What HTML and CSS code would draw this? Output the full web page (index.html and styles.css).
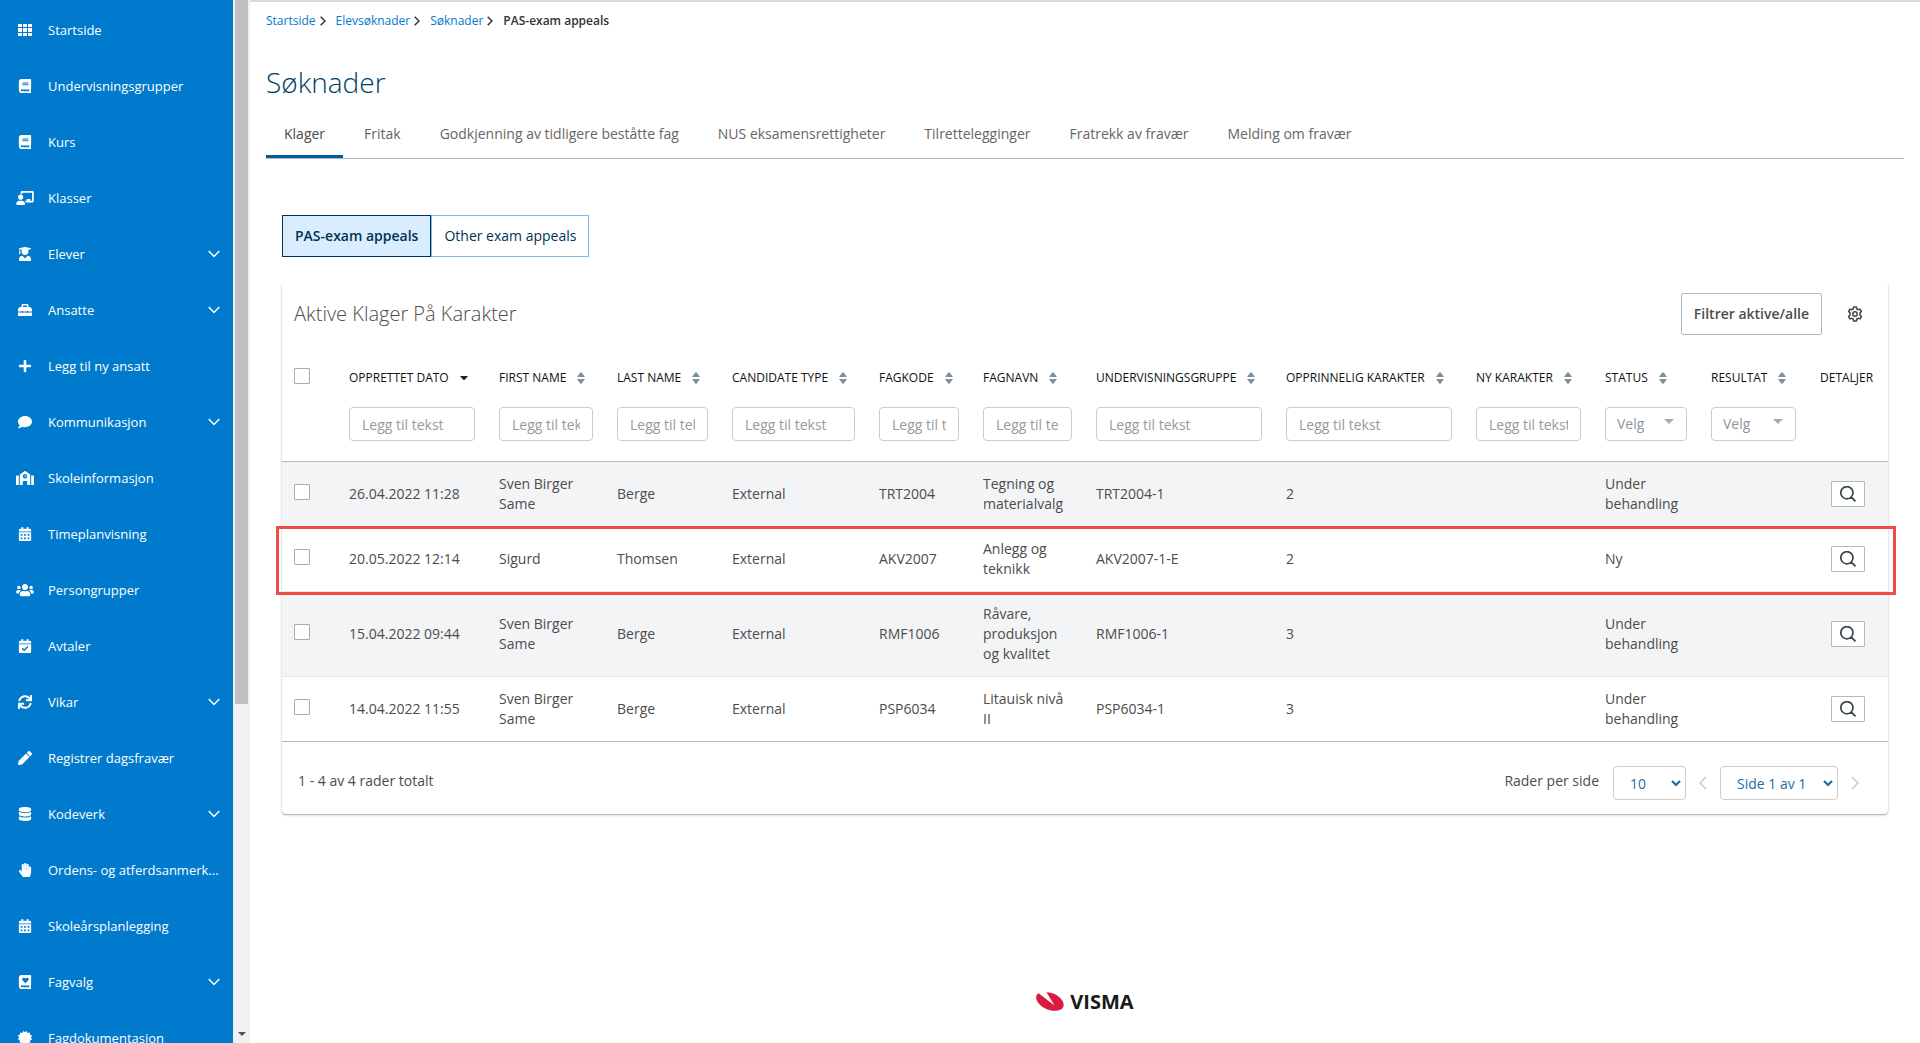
FILE: index.html
```html
<!DOCTYPE html>
<html lang="no">
<head>
<meta charset="utf-8">
<meta name="viewport" content="width=device-width, initial-scale=1">
<title>Søknader – PAS-exam appeals</title>
<link rel="stylesheet" href="styles.css">
</head>
<body>
<svg class="sprite" aria-hidden="true">
  <symbol id="i-grid" viewBox="0 0 14 14"><path d="M0 1h4v3H0zM5 1h4v3H5zM10 1h4v3h-4zM0 5h4v4H0zM5 5h4v4H5zM10 5h4v4h-4zM0 10h4v3H0zM5 10h4v3H5zM10 10h4v3h-4z"/></symbol>
  <symbol id="i-book" viewBox="0 0 448 512"><path d="M448 360V24c0-13.3-10.7-24-24-24H96C43 0 0 43 0 96v320c0 53 43 96 96 96h328c13.3 0 24-10.7 24-24v-16c0-7.5-3.5-14.3-8.9-18.7-4.2-15.4-4.2-59.3 0-74.7 5.4-4.3 8.9-11.1 8.9-18.6zM128 134c0-3.3 2.7-6 6-6h212c3.3 0 6 2.7 6 6v20c0 3.3-2.7 6-6 6H134c-3.3 0-6-2.7-6-6v-20zm0 64c0-3.3 2.7-6 6-6h212c3.3 0 6 2.7 6 6v20c0 3.3-2.7 6-6 6H134c-3.3 0-6-2.7-6-6v-20zm253.4 250H96c-17.7 0-32-14.3-32-32 0-17.6 14.4-32 32-32h285.4c-1.9 17.1-1.9 46.9 0 64z"/></symbol>
  <symbol id="i-teacher" viewBox="0 0 640 512"><path d="M208 352c-2.39 0-4.78.35-7.06 1.09C187.98 357.3 174.35 360 160 360c-14.35 0-27.98-2.7-40.95-6.91-2.28-.74-4.66-1.09-7.05-1.09C49.94 352-.33 402.48 0 464.62.14 490.88 21.73 512 48 512h224c26.27 0 47.86-21.12 48-47.38.33-62.14-49.94-112.62-112-112.62zm-48-32c53.02 0 96-42.98 96-96s-42.98-96-96-96-96 42.98-96 96 42.98 96 96 96zM592 0H208c-26.47 0-48 22.25-48 49.59V96c23.42 0 45.1 6.78 64 17.8V64h352v288h-64v-64H384v64h-76.24c19.1 16.69 33.12 38.73 39.69 64H592c26.47 0 48-22.25 48-49.59V49.59C640 22.25 618.47 0 592 0z"/></symbol>
  <symbol id="i-graduate" viewBox="0 0 448 512"><path d="M319.4 320.6L224 416l-95.4-95.4C57.1 323.7 0 382.2 0 454.4v9.6c0 26.5 21.5 48 48 48h352c26.5 0 48-21.5 48-48v-9.6c0-72.2-57.1-130.7-128.6-133.8zM13.6 79.8l6.4 1.5v58.4c-7 4.2-12 11.5-12 20.3 0 8.4 4.6 15.4 11.1 19.7L3.5 242c-1.7 6.9 2.1 14 7.6 14h41.8c5.5 0 9.3-7.1 7.6-14l-15.6-62.3C51.4 175.4 56 168.4 56 160c0-8.8-5-16.1-12-20.3V87.1l66 15.9c-8.6 17.2-14 36.4-14 57 0 70.7 57.3 128 128 128s128-57.3 128-128c0-20.6-5.3-39.8-14-57l96.3-23.2c18.2-4.4 18.2-27.1 0-31.5l-190.4-46c-13-3.1-26.7-3.1-39.7 0L13.6 48.2c-18.1 4.4-18.1 27.2 0 31.6z"/></symbol>
  <symbol id="i-toolbox" viewBox="0 0 14 14"><path fill-rule="evenodd" d="M3.5 4V2.4C3.5 1.600 4 1 4.900 1h4.200c.9 0 1.400.6 1.400 1.400V4h1.200c.3 0 .6.100.8.300l1.200 1.200c.2.200.3.500.3.800V8.500H10V8H9v.5H5V8H4v.5H0V6.300c0-.3.100-.6.300-.8l1.200-1.200c.2-.2.500-.3.800-.3zM5 4h4V2.500H5zM0 9.500h4v.5h1v-.5h4v.5h1v-.5h4V12c0 .6-.4 1-1 1H1c-.6 0-1-.4-1-1z"/></symbol>
  <symbol id="i-plus" viewBox="0 0 448 512"><path d="M416 208H272V64c0-17.670-14.330-32-32-32h-32c-17.670 0-32 14.330-32 32v144H32c-17.670 0-32 14.330-32 32v32c0 17.670 14.330 32 32 32h144v144c0 17.670 14.330 32 32 32h32c17.670 0 32-14.330 32-32V304h144c17.670 0 32-14.330 32-32v-32c0-17.670-14.330-32-32-32z"/></symbol>
  <symbol id="i-comment" viewBox="0 0 512 512"><path d="M256 32C114.600 32 0 125.100 0 240c0 49.600 21.400 95 57 130.700C44.500 421.100 2.700 466 2.200 466.500c-2.200 2.300-2.800 5.700-1.500 8.700S4.800 480 8 480c66.300 0 116-31.800 140.600-51.400 32.700 12.300 69 19.400 107.400 19.400 141.400 0 256-93.100 256-208S397.400 32 256 32z"/></symbol>
  <symbol id="i-school" viewBox="0 0 18 14"><path fill-rule="evenodd" d="M0 5.500c0-.6.400-1 1-1h1.800V14H.5c-.3 0-.5-.2-.5-.5zM18 5.500c0-.6-.4-1-1-1h-1.800V14h2.300c.3 0 .5-.2.500-.5zM3.800 3.500 8.400.3c.4-.3.800-.3 1.200 0l4.600 3.200V14H11.200v-3.500c0-.3-.2-.5-.5-.5H7.300c-.3 0-.5.200-.5.500V14h-3zM9 3a2.200 2.200 0 1 0 0 4.400A2.200 2.200 0 0 0 9 3zM8.700 4h.7v1h.8v.7H8.700z"/></symbol>
  <symbol id="i-calendar" viewBox="0 0 448 512"><path fill-rule="evenodd" d="M0 464c0 26.500 21.500 48 48 48h352c26.500 0 48-21.500 48-48V192H0zM64 256h64v64H64zM192 256h64v64h-64zM320 256h64v64h-64zM64 384h64v64H64zM192 384h64v64h-64zM320 384h64v64h-64zM400 64h-48V16c0-8.800-7.200-16-16-16h-32c-8.800 0-16 7.200-16 16v48H160V16c0-8.800-7.200-16-16-16h-32c-8.800 0-16 7.200-16 16v48H48C21.500 64 0 85.500 0 112v48h448v-48c0-26.500-21.500-48-48-48z"/></symbol>
  <symbol id="i-users" viewBox="0 0 640 512"><path d="M96 224c35.300 0 64-28.700 64-64s-28.700-64-64-64-64 28.700-64 64 28.700 64 64 64zm448 0c35.300 0 64-28.700 64-64s-28.700-64-64-64-64 28.700-64 64 28.700 64 64 64zm32 32h-64c-17.600 0-33.500 7.100-45.100 18.600 40.300 22.100 68.900 62 75.100 109.400h66c17.700 0 32-14.300 32-32v-32c0-35.300-28.700-64-64-64zm-256 0c61.900 0 112-50.100 112-112S381.900 32 320 32 208 82.100 208 144s50.100 112 112 112zm76.800 32h-8.300c-20.800 10-43.900 16-68.500 16s-47.600-6-68.500-16h-8.300C179.600 288 128 339.600 128 403.200V432c0 26.500 21.500 48 48 48h288c26.500 0 48-21.500 48-48v-28.800c0-63.600-51.600-115.200-115.200-115.200zm-223.700-13.400C161.500 263.100 145.600 256 128 256H64c-35.300 0-64 28.700-64 64v32c0 17.700 14.300 32 32 32h65.900c6.300-47.400 34.900-87.300 75.200-109.400z"/></symbol>
  <symbol id="i-check" viewBox="0 0 448 512"><path fill-rule="evenodd" d="M0 464c0 26.500 21.500 48 48 48h352c26.500 0 48-21.500 48-48V192H0zM192 446l-90-90 38-38 54 54 116-116 38 38zM400 64h-48V16c0-8.800-7.200-16-16-16h-32c-8.800 0-16 7.200-16 16v48H160V16c0-8.800-7.200-16-16-16h-32c-8.800 0-16 7.200-16 16v48H48C21.500 64 0 85.500 0 112v48h448v-48c0-26.500-21.500-48-48-48z"/></symbol>
  <symbol id="i-sync" viewBox="0 0 512 512"><path d="M440.650 12.570l4 82.770A247.160 247.160 0 0 0 255.830 8C134.730 8 33.910 94.920 12.290 209.820A12 12 0 0 0 24.090 224h49.050a12 12 0 0 0 11.670-9.260 175.910 175.910 0 0 1 317-56.940l-101.460-4.860a12 12 0 0 0-12.570 12v47.410a12 12 0 0 0 12 12H500a12 12 0 0 0 12-12V12a12 12 0 0 0-12-12h-47.370a12 12 0 0 0-11.980 12.570zM255.830 432a175.610 175.610 0 0 1-146-77.800l101.800 4.870a12 12 0 0 0 12.570-12v-47.400a12 12 0 0 0-12-12H12a12 12 0 0 0-12 12V500a12 12 0 0 0 12 12h47.350a12 12 0 0 0 12-12.600l-4.150-82.570A247.170 247.170 0 0 0 255.830 504c121.110 0 221.930-86.920 243.550-201.820a12 12 0 0 0-11.800-14.180h-49.050a12 12 0 0 0-11.670 9.260A175.860 175.860 0 0 1 255.830 432z"/></symbol>
  <symbol id="i-pencil" viewBox="0 0 512 512"><path d="M497.900 142.100l-46.100 46.100c-4.700 4.700-12.300 4.700-17 0l-111-111c-4.700-4.700-4.700-12.300 0-17l46.100-46.100c18.700-18.700 49.100-18.700 67.900 0l60.100 60.100c18.800 18.700 18.800 49.100 0 67.900zM284.200 99.800L21.600 362.400.4 483.900c-2.900 16.400 11.400 30.600 27.800 27.800l121.500-21.300 262.600-262.600c4.700-4.700 4.700-12.300 0-17l-111-111c-4.800-4.700-12.400-4.700-17.100 0z"/></symbol>
  <symbol id="i-database" viewBox="0 0 448 512"><path d="M448 73.143v45.714C448 159.143 347.667 192 224 192S0 159.143 0 118.857V73.143C0 32.857 100.333 0 224 0s224 32.857 224 73.143zM448 176v102.857C448 319.143 347.667 352 224 352S0 319.143 0 278.857V176c48.125 33.143 136.208 48.572 224 48.572S399.874 209.143 448 176zm0 160v102.857C448 479.143 347.667 512 224 512S0 479.143 0 438.857V336c48.125 33.143 136.208 48.572 224 48.572S399.874 369.143 448 336z"/></symbol>
  <symbol id="i-hand" viewBox="0 0 448 512"><path d="M408.781 128.007C386.356 127.578 368 146.360 368 168.790V256h-8V79.790c0-22.430-18.356-41.212-40.781-40.783C297.488 39.423 280 57.169 280 79v177h-8V40.790C272 18.360 253.644-.422 231.219.007 209.488.423 192 18.169 192 40v216h-8V80.790c0-22.430-18.356-41.212-40.781-40.783C121.488 40.423 104 58.169 104 80v235.992l-31.648-43.519c-12.993-17.866-38.009-21.817-55.877-8.823-17.865 12.994-21.815 38.010-8.822 55.877l125.601 172.705A48 48 0 0 0 172.073 512h197.590c22.274 0 41.622-15.324 46.724-37.006l26.508-112.660a192.011 192.011 0 0 0 5.104-43.975V168c.001-21.831-17.487-39.577-39.218-39.993z"/></symbol>
  <symbol id="i-heartbook" viewBox="0 0 448 512"><path fill-rule="evenodd" d="M448 360V24c0-13.300-10.700-24-24-24H96C43 0 0 43 0 96v320c0 53 43 96 96 96h328c13.300 0 24-10.700 24-24v-16c0-7.500-3.500-14.300-8.900-18.700-4.200-15.400-4.200-59.300 0-74.700 5.400-4.300 8.900-11.100 8.900-18.600zM240 304 140 200c-28-30-24-72 4-92 28-19 60-14 84 10l12 13 12-13c24-24 56-29 84-10 28 20 32 62 4 92zM381.400 448H96c-17.700 0-32-14.300-32-32 0-17.600 14.400-32 32-32h285.400c-1.900 17.100-1.900 46.900 0 64z"/></symbol>
  <symbol id="i-certificate" viewBox="0 0 14 14"><path d="M7 1.300 8.700 0l1 1.900 2.200-.4.200 2.200 1.900.9L13 6.500l1 2-1.900 1 .1 2.200-2.300.1L9 14l-2-1.200L5 14l-.9-2.200-2.300-.1.100-2.200L0 8.500l1-2-1-1.900.9-.9H1.900l.2-2.200 2.200.4 1-1.900z"/></symbol>
  <symbol id="i-down" viewBox="0 0 12 8"><path d="M.700.900 6 6.500 11.300.900" fill="none" stroke="currentColor" stroke-width="1.500"/></symbol>
  <symbol id="i-down-bold" viewBox="0 0 10 7"><path d="M1 1 5 5 9 1" fill="none" stroke="currentColor" stroke-width="2.200"/></symbol>
  <symbol id="i-sort" viewBox="0 0 8 12"><path d="M0 5 3 .700Q4-.300 5 .700L8 5zM0 7h8L5 11.300q-1 1-2 0z"/></symbol>
  <symbol id="i-sorted" viewBox="0 0 8 12"><path d="M0 4h8L5 7.500q-1 1-2 0z"/></symbol>
  <symbol id="i-search" viewBox="0 0 16 16"><path d="M11 10.800 15.500 15.300M13 6.700a6.100 6.100 0 1 1-12.200 0 6.100 6.100 0 0 1 12.200 0z" fill="none" stroke="currentColor" stroke-width="1.700"/></symbol>
  <symbol id="i-next" viewBox="0 0 8 14"><path d="M1 1l6 6-6 6" fill="none" stroke="currentColor" stroke-width="1.500"/></symbol>
  <symbol id="i-crumb" viewBox="0 0 6 10"><path d="M.700.700 5 5 .700 9.300" fill="none" stroke="currentColor" stroke-width="1.500"/></symbol>
  <symbol id="i-gear" viewBox="0 0 16 16"><path d="M6.600 1h2.800l.4 2 1.300.7 1.900-.6 1.400 2.400L13 6.900v2.200l1.400 1.400-1.400 2.400-1.900-.6-1.300.7-.4 2H6.600l-.4-2-1.300-.7-1.900.6-1.400-2.400L3 9.100V6.900L1.600 5.500 3 3.100l1.900.6L6.200 3z" fill="none" stroke="currentColor" stroke-width="1.500" stroke-linejoin="round"/><circle cx="8" cy="8" r="2.200" fill="none" stroke="currentColor" stroke-width="1.500"/></symbol>
</svg>

<div class="app">
  <nav class="sidebar" aria-label="Hovedmeny">
    <ul class="menu">
      <li><a class="menu-link" href="#"><svg class="menu-icon"><use href="#i-grid"/></svg><span class="menu-text">Startside</span></a></li>
      <li><a class="menu-link" href="#"><svg class="menu-icon"><use href="#i-book"/></svg><span class="menu-text">Undervisningsgrupper</span></a></li>
      <li><a class="menu-link" href="#"><svg class="menu-icon"><use href="#i-book"/></svg><span class="menu-text">Kurs</span></a></li>
      <li><a class="menu-link" href="#"><svg class="menu-icon"><use href="#i-teacher"/></svg><span class="menu-text">Klasser</span></a></li>
      <li><a class="menu-link" href="#"><svg class="menu-icon"><use href="#i-graduate"/></svg><span class="menu-text">Elever</span><svg class="menu-arrow"><use href="#i-down"/></svg></a></li>
      <li><a class="menu-link" href="#"><svg class="menu-icon"><use href="#i-toolbox"/></svg><span class="menu-text">Ansatte</span><svg class="menu-arrow"><use href="#i-down"/></svg></a></li>
      <li><a class="menu-link" href="#"><svg class="menu-icon"><use href="#i-plus"/></svg><span class="menu-text">Legg til ny ansatt</span></a></li>
      <li><a class="menu-link" href="#"><svg class="menu-icon"><use href="#i-comment"/></svg><span class="menu-text">Kommunikasjon</span><svg class="menu-arrow"><use href="#i-down"/></svg></a></li>
      <li><a class="menu-link" href="#"><svg class="menu-icon"><use href="#i-school"/></svg><span class="menu-text">Skoleinformasjon</span></a></li>
      <li><a class="menu-link" href="#"><svg class="menu-icon"><use href="#i-calendar"/></svg><span class="menu-text">Timeplanvisning</span></a></li>
      <li><a class="menu-link" href="#"><svg class="menu-icon"><use href="#i-users"/></svg><span class="menu-text">Persongrupper</span></a></li>
      <li><a class="menu-link" href="#"><svg class="menu-icon"><use href="#i-check"/></svg><span class="menu-text">Avtaler</span></a></li>
      <li><a class="menu-link" href="#"><svg class="menu-icon"><use href="#i-sync"/></svg><span class="menu-text">Vikar</span><svg class="menu-arrow"><use href="#i-down"/></svg></a></li>
      <li><a class="menu-link" href="#"><svg class="menu-icon"><use href="#i-pencil"/></svg><span class="menu-text">Registrer dagsfravær</span></a></li>
      <li><a class="menu-link" href="#"><svg class="menu-icon"><use href="#i-database"/></svg><span class="menu-text">Kodeverk</span><svg class="menu-arrow"><use href="#i-down"/></svg></a></li>
      <li><a class="menu-link" href="#"><svg class="menu-icon"><use href="#i-hand"/></svg><span class="menu-text">Ordens- og atferdsanmerk...</span></a></li>
      <li><a class="menu-link" href="#"><svg class="menu-icon"><use href="#i-calendar"/></svg><span class="menu-text">Skoleårsplanlegging</span></a></li>
      <li><a class="menu-link" href="#"><svg class="menu-icon"><use href="#i-heartbook"/></svg><span class="menu-text">Fagvalg</span><svg class="menu-arrow"><use href="#i-down"/></svg></a></li>
      <li><a class="menu-link" href="#"><svg class="menu-icon"><use href="#i-certificate"/></svg><span class="menu-text">Fagdokumentasjon</span></a></li>
    </ul>
    <div class="scrollbar" aria-hidden="true"><span class="scroll-thumb"></span><span class="scroll-down"></span></div>
  </nav>

  <main class="main">
    <nav aria-label="Brødsmulesti">
      <ol class="crumbs">
        <li class="crumb"><a href="#">Startside</a><svg class="crumb-icon"><use href="#i-crumb"/></svg></li>
        <li class="crumb"><a href="#">Elevsøknader</a><svg class="crumb-icon"><use href="#i-crumb"/></svg></li>
        <li class="crumb"><a href="#">Søknader</a><svg class="crumb-icon"><use href="#i-crumb"/></svg></li>
        <li class="crumb crumb-current" aria-current="page">PAS-exam appeals</li>
      </ol>
    </nav>
    <h1 class="page-title">Søknader</h1>
    <nav class="tabs" aria-label="Søknadstyper">
      <a class="tab tab-active" href="#">Klager</a>
      <a class="tab" href="#">Fritak</a>
      <a class="tab" href="#">Godkjenning av tidligere beståtte fag</a>
      <a class="tab" href="#">NUS eksamensrettigheter</a>
      <a class="tab" href="#">Tilrettelegginger</a>
      <a class="tab" href="#">Fratrekk av fravær</a>
      <a class="tab" href="#">Melding om fravær</a>
    </nav>

    <div class="content">
      <div class="toggle">
        <button class="toggle-btn toggle-on" type="button" aria-pressed="true">PAS-exam appeals</button>
        <button class="toggle-btn" type="button" aria-pressed="false">Other exam appeals</button>
      </div>

      <section class="card" aria-labelledby="card-title">
        <header class="card-head">
          <h2 class="card-title" id="card-title">Aktive Klager På Karakter</h2>
          <button class="filter-btn" type="button">Filtrer aktive/alle</button>
          <button class="gear-btn" type="button" aria-label="Innstillinger"><svg class="icon-16"><use href="#i-gear"/></svg></button>
        </header>

        <table class="grid">
          <colgroup>
            <col class="c-check"><col class="c-date"><col class="c-first"><col class="c-last"><col class="c-type"><col class="c-code"><col class="c-name"><col class="c-group"><col class="c-group"><col class="c-new"><col class="c-status"><col class="c-result"><col class="c-detail">
          </colgroup>
          <thead>
            <tr class="titles">
              <th><input class="tick" type="checkbox" aria-label="Velg alle"></th>
              <th><button class="sort sorted" type="button">Opprettet dato<svg class="sort-icon"><use href="#i-sorted"/></svg></button></th>
              <th><button class="sort" type="button">First name<svg class="sort-icon"><use href="#i-sort"/></svg></button></th>
              <th><button class="sort" type="button">Last name<svg class="sort-icon"><use href="#i-sort"/></svg></button></th>
              <th><button class="sort" type="button">Candidate type<svg class="sort-icon"><use href="#i-sort"/></svg></button></th>
              <th><button class="sort" type="button">Fagkode<svg class="sort-icon"><use href="#i-sort"/></svg></button></th>
              <th><button class="sort" type="button">Fagnavn<svg class="sort-icon"><use href="#i-sort"/></svg></button></th>
              <th><button class="sort" type="button">Undervisningsgruppe<svg class="sort-icon"><use href="#i-sort"/></svg></button></th>
              <th><button class="sort" type="button">Opprinnelig karakter<svg class="sort-icon"><use href="#i-sort"/></svg></button></th>
              <th><button class="sort" type="button">Ny karakter<svg class="sort-icon"><use href="#i-sort"/></svg></button></th>
              <th><button class="sort" type="button">Status<svg class="sort-icon"><use href="#i-sort"/></svg></button></th>
              <th><button class="sort" type="button">Resultat<svg class="sort-icon"><use href="#i-sort"/></svg></button></th>
              <th>Detaljer</th>
            </tr>
            <tr class="filters">
              <td></td>
              <td><input class="field" type="text" placeholder="Legg til tekst" aria-label="Filtrer opprettet dato"></td>
              <td><input class="field" type="text" placeholder="Legg til tekst" aria-label="Filtrer first name"></td>
              <td><input class="field" type="text" placeholder="Legg til tekst" aria-label="Filtrer last name"></td>
              <td><input class="field" type="text" placeholder="Legg til tekst" aria-label="Filtrer candidate type"></td>
              <td><input class="field" type="text" placeholder="Legg til tekst" aria-label="Filtrer fagkode"></td>
              <td><input class="field" type="text" placeholder="Legg til tekst" aria-label="Filtrer fagnavn"></td>
              <td><input class="field" type="text" placeholder="Legg til tekst" aria-label="Filtrer undervisningsgruppe"></td>
              <td><input class="field" type="text" placeholder="Legg til tekst" aria-label="Filtrer opprinnelig karakter"></td>
              <td><input class="field" type="text" placeholder="Legg til tekst" aria-label="Filtrer ny karakter"></td>
              <td><div class="pick pick-filter"><select class="field" aria-label="Filtrer status"><option>Velg</option></select></div></td>
              <td><div class="pick pick-filter"><select class="field" aria-label="Filtrer resultat"><option>Velg</option></select></div></td>
              <td></td>
            </tr>
          </thead>
          <tbody>
            <tr>
              <td><input class="tick" type="checkbox" aria-label="Velg rad 1"></td>
              <td>26.04.2022 11:28</td><td>Sven Birger Same</td><td>Berge</td><td>External</td><td>TRT2004</td><td>Tegning og materialvalg</td><td>TRT2004-1</td><td>2</td><td></td><td>Under behandling</td><td></td>
              <td class="detail"><button class="look" type="button" aria-label="Vis detaljer"><svg class="icon-16"><use href="#i-search"/></svg></button></td>
            </tr>
            <tr class="marked">
              <td><input class="tick" type="checkbox" aria-label="Velg rad 2"></td>
              <td>20.05.2022 12:14</td><td>Sigurd</td><td>Thomsen</td><td>External</td><td>AKV2007</td><td>Anlegg og teknikk</td><td>AKV2007-1-E</td><td>2</td><td></td><td>Ny</td><td></td>
              <td class="detail"><button class="look" type="button" aria-label="Vis detaljer"><svg class="icon-16"><use href="#i-search"/></svg></button></td>
            </tr>
            <tr>
              <td><input class="tick" type="checkbox" aria-label="Velg rad 3"></td>
              <td>15.04.2022 09:44</td><td>Sven Birger Same</td><td>Berge</td><td>External</td><td>RMF1006</td><td>Råvare, produksjon og kvalitet</td><td>RMF1006-1</td><td>3</td><td></td><td>Under behandling</td><td></td>
              <td class="detail"><button class="look" type="button" aria-label="Vis detaljer"><svg class="icon-16"><use href="#i-search"/></svg></button></td>
            </tr>
            <tr>
              <td><input class="tick" type="checkbox" aria-label="Velg rad 4"></td>
              <td>14.04.2022 11:55</td><td>Sven Birger Same</td><td>Berge</td><td>External</td><td>PSP6034</td><td>Litauisk nivå II</td><td>PSP6034-1</td><td>3</td><td></td><td>Under behandling</td><td></td>
              <td class="detail"><button class="look" type="button" aria-label="Vis detaljer"><svg class="icon-16"><use href="#i-search"/></svg></button></td>
            </tr>
          </tbody>
        </table>

        <footer class="card-foot">
          <p class="total">1 - 4 av 4 rader totalt</p>
          <label class="per-page" for="rows">Rader per side</label>
          <div class="pick pick-rows"><select class="field" id="rows"><option>10</option></select><svg class="pick-icon"><use href="#i-down-bold"/></svg></div>
          <button class="page-btn page-prev" type="button" aria-label="Forrige side" disabled><svg class="page-icon"><use href="#i-next"/></svg></button>
          <div class="pick pick-page"><select class="field" aria-label="Side"><option>Side 1 av 1</option></select><svg class="pick-icon"><use href="#i-down-bold"/></svg></div>
          <button class="page-btn" type="button" aria-label="Neste side" disabled><svg class="page-icon"><use href="#i-next"/></svg></button>
        </footer>
      </section>
    </div>

    <footer class="brand">
      <svg class="brand-mark" viewBox="0 0 28 20" aria-hidden="true"><path fill="#d9193f" d="M10.500.200C17 .200 24 4 26.800 9.500c2 4.500.5 8-4.800 9-7 1.300-16-2-20-8C-.500 6.500-.600 3 2.600 1.200L18.500 13.500z"/></svg>
      <span class="brand-name">VISMA</span>
    </footer>
  </main>
</div>
</body>
</html>
```
FILE: styles.css
```css
* { box-sizing: border-box; }

body {
  margin: 0;
  font-family: "Open Sans", "Noto Sans", sans-serif;
  font-size: 14px;
  line-height: 20px;
  color: #4c4c4c;
  background: #fff;
}

button, input, select { font: inherit; color: inherit; margin: 0; }
button { padding: 0; background: none; border: 0; cursor: pointer; }
a { text-decoration: none; }
ul, ol { list-style: none; margin: 0; padding: 0; }
svg { display: block; flex: none; fill: currentColor; }

.sprite { display: none; }
.icon-16 { width: 16px; height: 16px; }

.app { display: flex; min-height: 100vh; }

/* Sidebar */
.sidebar {
  display: flex;
  flex: none;
  width: 250px;
  height: 100vh;
  position: sticky;
  top: 0;
  overflow: hidden;
  color: #fff;
  background: #007acc;
}
.menu { flex: 1; min-width: 0; padding-top: 2px; }
.menu-link {
  display: flex;
  align-items: center;
  height: 56px;
  padding: 0 8px 0 16px;
  gap: 14px;
  font-size: 13px;
  font-weight: 500;
  color: #fff;
}
.menu-icon { width: 18px; height: 14px; }
.menu-text { flex: 1; white-space: nowrap; }
.menu-arrow { width: 12px; height: 8px; margin-right: 5px; }

.scrollbar {
  display: flex;
  flex-direction: column;
  align-items: center;
  justify-content: space-between;
  width: 17px;
  padding-bottom: 7px;
  background: #f1f1f1;
}
.scroll-thumb { width: 13px; height: 68%; background: #c1c1c1; }
.scroll-down { border: 4px solid transparent; border-top-color: #505050; border-bottom: 0; }

/* Page frame */
.main {
  display: flex;
  flex-direction: column;
  flex: 1;
  min-width: 0;
  padding: 9px 16px 0;
  border-top: 2px solid #d5dbdd;
}
.crumbs { display: flex; gap: 10px; font-size: 12px; }
.crumb { display: flex; align-items: center; gap: 4px; }
.crumb a { color: #007acc; }
.crumb-icon { width: 6px; height: 10px; color: #333; }
.crumb-current { font-weight: 600; color: #333; }

.page-title {
  margin: 31px 0 0;
  font-size: 28px;
  line-height: 40px;
  font-weight: 300;
  color: #003e66;
}

.tabs { display: flex; gap: 3px; margin-top: 12px; border-bottom: 1px solid #b2bac0; }
.tab {
  padding: 10px 18px 11px;
  border-bottom: 3px solid transparent;
  color: #666;
}
.tab-active { color: #4c4c4c; border-bottom-color: #005b99; }

.content { flex: 1; padding: 56px 16px 0; }

.toggle { display: flex; }
.toggle-btn {
  height: 42px;
  padding: 0 12px;
  border: 1px solid #7abaff;
  color: #003253;
}
.toggle-on {
  border-color: #003253;
  font-weight: 600;
  background: #daedff;
}

/* Card */
.card {
  margin-top: 25px;
  border-radius: 4px;
  box-shadow: 0 1px 3px rgba(0, 0, 0, .2), 0 1px 1px rgba(0, 0, 0, .2);
  clip-path: inset(0 -16px -8px -16px);
}
.card-head { display: flex; align-items: center; height: 64px; padding: 0 25px 0 12px; }
.card-title { flex: 1; margin: 0; font-size: 20px; line-height: 28px; font-weight: 300; color: #4c4c4c; }
.filter-btn {
  height: 42px;
  padding: 0 12px;
  border: 1px solid #b2bac0;
  border-radius: 2px;
  font-weight: 600;
  color: #4c4c4c;
}
.gear-btn { margin-left: 25px; color: #3c474d; }

.grid { width: 100%; table-layout: fixed; border-spacing: 0; border-collapse: separate; }
.c-check { width: 55px; }
.c-date { width: 150px; }
.c-first { width: 118px; }
.c-last { width: 115px; }
.c-type { width: 147px; }
.c-code { width: 104px; }
.c-name { width: 113px; }
.c-group { width: 190px; }
.c-new { width: 129px; }
.c-status { width: 106px; }
.c-result { width: 109px; }
.c-detail { width: 80px; }

.grid th {
  padding: 22px 0 9px 12px;
  font-size: 12px;
  font-weight: 500;
  text-align: left;
  text-transform: uppercase;
  white-space: nowrap;
  color: #111;
}
.sort { display: flex; align-items: center; gap: 11px; font-weight: 500; text-transform: uppercase; }
.sort-icon { width: 8px; height: 12px; color: #80929c; }
.sorted .sort-icon { color: #222; }

.grid td { padding: 12px; border-bottom: 1px solid #e5e8ea; vertical-align: middle; }
.filters td { padding: 10px 12px 20px; border-bottom-color: #b2bac0; }
.grid tbody tr:nth-child(odd) { background: #f3f4f6; }
.grid tbody tr:last-child td { border-bottom-color: #b2bac0; }

.tick {
  display: block;
  width: 16px;
  height: 16px;
  margin-bottom: 4px;
  appearance: none;
  background: #fff;
  border: 1px solid #a3adb3;
  border-radius: 1px;
}

.field {
  display: block;
  width: 100%;
  height: 34px;
  padding: 0 12px;
  appearance: none;
  background: #fff;
  border: 1px solid #ccc;
  border-radius: 4px;
  color: #5b6770;
}
.field::placeholder { color: #999; opacity: 1; }

.pick { position: relative; }
.pick-filter .field { padding: 0 11px; color: #8c979e; }
.pick-filter::after {
  content: "";
  position: absolute;
  top: 12px;
  right: 13px;
  border: 5px solid transparent;
  border-top-color: #a3adb3;
  border-bottom: 0;
}
.pick-icon { position: absolute; top: 14px; right: 5px; width: 10px; height: 7px; color: #1f6ea5; pointer-events: none; }

.detail { text-align: center; }
.look {
  display: inline-flex;
  align-items: center;
  justify-content: center;
  width: 34px;
  height: 26px;
  vertical-align: middle;
  background: #fff;
  border: 1px solid #b2bac0;
  border-radius: 1px;
  color: #3c474d;
}

.marked { position: relative; }
.marked td:first-child::after {
  content: "";
  position: absolute;
  inset: -1px -8px -3px -6px;
  border: 3px solid #ec4d46;
  pointer-events: none;
}

.card-foot { display: flex; align-items: center; height: 72px; padding: 10px 29px 0 16px; }
.card-foot .field { color: #1f6ea5; }
.total { flex: 1; margin: 0 0 4px; }
.per-page { margin: 0 14px 4px 0; }
.pick-rows { width: 73px; }
.pick-page { width: 118px; }
.pick-rows .field, .pick-page .field { padding: 2px 16px 0; }
.page-btn { padding: 0 0 0 13px; color: #c5cacd; cursor: default; }
.page-icon { width: 8px; height: 14px; }
.page-prev { padding: 0 13px; }
.page-prev .page-icon { rotate: 180deg; }

/* Brand */
.brand { display: flex; align-items: center; justify-content: center; gap: 6px; padding: 32px 0 27px; }
.brand-mark { width: 28px; height: 20px; }
.brand-name {
  font-family: "Liberation Sans Narrow", "Arial Narrow", "Open Sans", sans-serif;
  font-size: 20px;
  line-height: 28px;
  font-weight: 700;
  color: #1a1a18;
}
```
